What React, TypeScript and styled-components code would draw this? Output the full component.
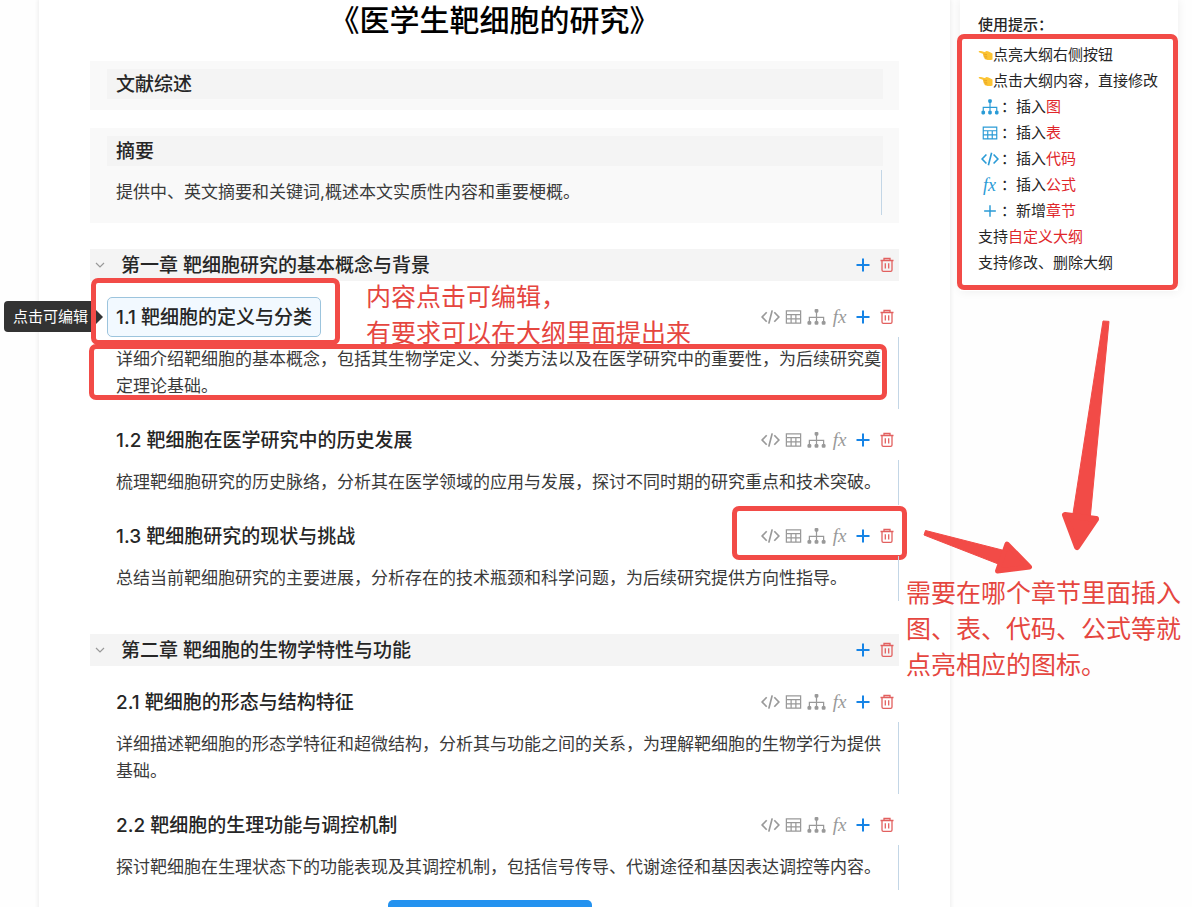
import React from "react";
import styled, { createGlobalStyle, css } from "styled-components";

const RED = "#f24b47";

const GlobalStyle = createGlobalStyle`
  *, *::before, *::after { box-sizing: border-box; }
  body {
    margin: 0;
    background: #fefefe;
    color: #262626;
    font-family: Inter, "Noto Sans CJK SC", sans-serif;
    font-size: 17px;
  }
  h1, h2, h3, p, ul { margin: 0; padding: 0; }
  button { font: inherit; color: inherit; border: 0; padding: 0; background: none; cursor: pointer; }
`;

const Page = styled.div`
  display: flex;
  align-items: flex-start;
  gap: 10px;
  height: 100vh;
  padding: 0 14px 0 39px;
  overflow-x: hidden;
  overflow-y: auto;
  scrollbar-width: none;
`;

const Panel = styled.main`
  flex: 1;
  min-width: 0;
  min-height: 100%;
  padding: 0 51px 40px;
  background: #fff;
  box-shadow: 0 0 4px 1px rgba(0, 0, 0, 0.07);
`;

const PaperTitle = styled.h1`
  margin-bottom: 21px;
  text-align: center;
  font-size: 30px;
  line-height: 40px;
  font-weight: 500;
  color: #000;
`;

const Card = styled.section`
  margin-bottom: 18px;
  padding: 8px 16px 11px 17px;
  background: #f9f9f9;
`;

const CardTitle = styled.h2`
  padding: 2px 9px 0;
  background: #f4f4f4;
  font-size: 19px;
  line-height: 28px;
  font-weight: 500;
`;

const Description = styled.p`
  position: relative;
  padding: 9px;
  border-right: 1px solid #c3d6e6;
  line-height: 27px;
  color: #3a3a3a;
`;

const CardBody = styled(Description)`
  margin: 4px 1px -3px 0;
`;

const Chapters = styled.div`
  padding-top: 8px;
`;

const Chapter = styled.section`
  & + & { margin-top: 33px; }
`;

const ChapterBar = styled.header`
  display: flex;
  align-items: center;
  height: 32px;
  margin-bottom: 16px;
  padding: 0 2px 0 5px;
  background: #f4f4f4;
`;

const ChapterTitle = styled.h2`
  flex: 1;
  margin-left: 16px;
  padding-top: 2px;
  font-size: 19px;
  line-height: 30px;
  font-weight: 500;
`;

const Collapse = styled.button`
  display: flex;
  width: 10px;
  color: #999;
`;

const Item = styled.article`
  padding-left: 17px;
  & + & { margin-top: 11px; }
`;

const ItemHead = styled.div`
  position: relative;
  display: flex;
  align-items: center;
  justify-content: space-between;
  height: 40px;
  padding-right: 2px;
`;

const ItemTitle = styled.h3`
  position: relative;
  display: flex;
  font-size: 19px;
  font-weight: 500;
`;

const EditButton = styled.button<{ $active?: boolean }>`
  height: 40px;
  padding: 0 8px 3px;
  border: 1px solid transparent;
  border-radius: 5px;
  ${(p) => p.$active && css`
    border-color: #9cc4dd;
    background: #f2f9ff;
  `}
`;

const Actions = styled.div`
  position: relative;
  display: flex;
  gap: 4px;
`;

const IconButton = styled.button<{ $tone: string; $narrow?: boolean }>`
  display: flex;
  align-items: center;
  justify-content: center;
  width: ${(p) => (p.$narrow ? 19 : 20)}px;
  height: 20px;
  color: ${(p) => p.$tone};
`;

const Formula = styled.span<{ $size: number }>`
  font-family: "Liberation Serif", serif;
  font-style: italic;
  font-size: ${(p) => p.$size}px;
  line-height: 20px;
`;

const Footer = styled.footer`
  display: flex;
  justify-content: center;
  padding: 10px 9px 0 0;
`;

const Submit = styled.button`
  width: 204px;
  height: 40px;
  border-radius: 5px;
  background: #2492ef;
`;

const Tooltip = styled.span`
  position: absolute;
  top: 4px;
  right: calc(100% + 12px);
  width: 91px;
  padding-left: 9px;
  border-radius: 4px;
  background: #333;
  color: #fff;
  font-size: 15px;
  line-height: 31px;
  font-weight: 400;
  white-space: nowrap;
  &::after {
    content: "";
    position: absolute;
    left: 100%;
    top: 8px;
    border: 8px solid transparent;
    border-left-color: #333;
    border-right-width: 0;
  }
`;

const Frame = styled.span<{ $inset: string }>`
  position: absolute;
  inset: ${(p) => p.$inset};
  border: 5px solid ${RED};
  border-radius: 7px;
  pointer-events: none;
`;

const Note = styled.p<{ $left: number; $top: number }>`
  position: absolute;
  left: ${(p) => p.$left}px;
  top: ${(p) => p.$top}px;
  color: #e5463f;
  font-size: 25px;
  line-height: 36px;
  white-space: nowrap;
`;

const Sidebar = styled.aside`
  position: relative;
  width: 218px;
  padding: 12px 0 15px 18px;
  background: #fff;
  box-shadow: 0 0 10px rgba(0, 0, 0, 0.07);
  font-size: 15px;
  line-height: 26px;
`;

const TipTitle = styled.h2`
  margin-bottom: 4px;
  font-size: 15px;
  font-weight: 500;
`;

const TipList = styled.ul`
  list-style: none;
`;

const Tip = styled.li`
  display: flex;
  align-items: center;
  height: 26px;
  white-space: nowrap;
`;

const TipIcon = styled.span<{ $wide?: boolean }>`
  display: flex;
  align-items: center;
  justify-content: center;
  width: ${(p) => (p.$wide ? 23 : 15)}px;
  color: #2a9bd6;
`;

const Strong = styled.em`
  font-style: normal;
  color: #e0262b;
`;

const Arrows = styled.svg`
  position: absolute;
  left: -40px;
  top: 316px;
  pointer-events: none;
`;

const CodeIcon = ({ size = 20 }: { size?: number }) => (
  <svg width={size} height={size} viewBox="0 0 20 20" fill="none" stroke="currentColor" strokeWidth="1.8">
    <path d="M6 5 1.200 10 6 15M14 5l4.800 5L14 15M11.800 3 8.200 17" />
  </svg>
);

const TableIcon = ({ size = 20 }: { size?: number }) => (
  <svg width={size} height={size} viewBox="0 0 20 20" fill="none" stroke="currentColor" strokeWidth="1.300">
    <path d="M2.500 3.500h15v13h-15zM2.500 7.500h15M2.500 12h15M7.500 7.500v9M12.500 7.500v9" />
  </svg>
);

const TreeIcon = ({ size = 20 }: { size?: number }) => (
  <svg width={size} height={size} viewBox="0 0 20 20" fill="none" stroke="currentColor" strokeWidth="1.300">
    <path d="M10 4v12M2.500 16v-5.500h15V16" />
    <g fill="currentColor" stroke="none">
      <rect x="8" y="1.500" width="4" height="4" rx="1.200" />
      <rect x="0.500" y="14.200" width="4" height="4" rx="1.200" />
      <rect x="8" y="14.200" width="4" height="4" rx="1.200" />
      <rect x="15.500" y="14.200" width="4" height="4" rx="1.200" />
    </g>
  </svg>
);

const PlusIcon = ({ size = 20, weight = 2 }: { size?: number; weight?: number }) => (
  <svg width={size} height={size} viewBox="0 0 20 20" fill="none" stroke="currentColor" strokeWidth={weight}>
    <path d="M10 3.500v13M3.500 10h13" />
  </svg>
);

const TrashIcon = () => (
  <svg width="20" height="20" viewBox="0 0 20 20" fill="none" stroke="currentColor" strokeWidth="1.300">
    <path d="M3.500 5.500h13M7 5.500V3.500h6v2M5 5.500v9.500q0 1.300 1.300 1.300h7.400q1.300 0 1.300-1.300V5.500M8.300 8.300v5.200M11.700 8.300v5.200" />
  </svg>
);

const ChevronIcon = () => (
  <svg width="10" height="10" viewBox="0 0 10 10" fill="none" stroke="currentColor" strokeWidth="1.200">
    <path d="M1 3l4 4 4-4" />
  </svg>
);

const HandIcon = () => (
  <svg width="15" height="12" viewBox="0 0 15 12">
    <path
      d="M.8 2.200C1.200 1.500 4.500 2.500 7 2.900 8 1.800 9.200 1.700 10.500 2.500L14.500 4.500V10.500C12.500 11.300 9.500 11.200 8 10.500 6.500 10.200 6.400 9.400 6.700 8.900 5.500 8.500 5.300 7.600 5.800 7.100 4.800 6.600 4.800 5.600 5.400 5.100L1.500 3.600C.8 3.300.6 2.700.8 2.200Z"
      fill="#fcc433"
    />
    <path d="M5.400 5.100 9 5.500M5.800 7.100l3.400.2M6.700 8.900l2.600.1" stroke="#e09a1c" strokeWidth=".7" fill="none" />
  </svg>
);

const GREY = "#999";

const EditActions = ({ full, framed }: { full?: boolean; framed?: boolean }) => (
  <Actions>
    {full && (
      <>
        <IconButton $narrow $tone={GREY} aria-label="插入代码"><CodeIcon /></IconButton>
        <IconButton $narrow $tone={GREY} aria-label="插入表"><TableIcon /></IconButton>
        <IconButton $narrow $tone={GREY} aria-label="插入图"><TreeIcon /></IconButton>
        <IconButton $narrow $tone={GREY} aria-label="插入公式"><Formula $size={19}>fx</Formula></IconButton>
      </>
    )}
    <IconButton $tone="#1684e6" aria-label="新增章节"><PlusIcon /></IconButton>
    <IconButton $tone="#e2605f" aria-label="删除"><TrashIcon /></IconButton>
    {framed && <Frame $inset="-20px -10px -14px -29px" />}
  </Actions>
);

type Entry = { title: string; text: string; active?: boolean; framed?: boolean };

const chapters: { title: string; items: Entry[] }[] = [
  {
    title: "第一章 靶细胞研究的基本概念与背景",
    items: [
      {
        title: "1.1 靶细胞的定义与分类",
        text: "详细介绍靶细胞的基本概念，包括其生物学定义、分类方法以及在医学研究中的重要性，为后续研究奠定理论基础。",
        active: true,
      },
      {
        title: "1.2 靶细胞在医学研究中的历史发展",
        text: "梳理靶细胞研究的历史脉络，分析其在医学领域的应用与发展，探讨不同时期的研究重点和技术突破。",
      },
      {
        title: "1.3 靶细胞研究的现状与挑战",
        text: "总结当前靶细胞研究的主要进展，分析存在的技术瓶颈和科学问题，为后续研究提供方向性指导。",
        framed: true,
      },
    ],
  },
  {
    title: "第二章 靶细胞的生物学特性与功能",
    items: [
      {
        title: "2.1 靶细胞的形态与结构特征",
        text: "详细描述靶细胞的形态学特征和超微结构，分析其与功能之间的关系，为理解靶细胞的生物学行为提供基础。",
      },
      {
        title: "2.2 靶细胞的生理功能与调控机制",
        text: "探讨靶细胞在生理状态下的功能表现及其调控机制，包括信号传导、代谢途径和基因表达调控等内容。",
      },
    ],
  },
];

const OutlineItem = ({ title, text, active, framed }: Entry) => (
  <Item>
    <ItemHead>
      <ItemTitle>
        <EditButton $active={active}>{title}</EditButton>
        {active && (
          <>
            <Tooltip role="tooltip">点击可编辑</Tooltip>
            <Frame $inset="-19px -19px -8px -16px" />
          </>
        )}
      </ItemTitle>
      <EditActions full framed={framed} />
      {active && (
        <Note $left={259} $top={-18}>
          内容点击可编辑，<br />有要求可以在大纲里面提出来
        </Note>
      )}
    </ItemHead>
    <Description>
      {text}
      {active && <Frame $inset="7px 11px 9px -18px" />}
    </Description>
  </Item>
);

const inserts = [
  { icon: <TreeIcon size={18} />, verb: "插入", target: "图" },
  { icon: <TableIcon size={18} />, verb: "插入", target: "表" },
  { icon: <CodeIcon size={18} />, verb: "插入", target: "代码" },
  { icon: <Formula $size={18}>fx</Formula>, verb: "插入", target: "公式" },
  { icon: <PlusIcon size={18} weight={1.6} />, verb: "新增", target: "章节" },
];

export default function App() {
  return (
    <>
      <GlobalStyle />
      <Page>
        <Panel>
          <PaperTitle>《医学生靶细胞的研究》</PaperTitle>
          <Card>
            <CardTitle>文献综述</CardTitle>
          </Card>
          <Card>
            <CardTitle>摘要</CardTitle>
            <CardBody>提供中、英文摘要和关键词,概述本文实质性内容和重要梗概。</CardBody>
          </Card>
          <Chapters>
            {chapters.map((chapter) => (
              <Chapter key={chapter.title}>
                <ChapterBar>
                  <Collapse aria-label="收起章节"><ChevronIcon /></Collapse>
                  <ChapterTitle>{chapter.title}</ChapterTitle>
                  <EditActions />
                </ChapterBar>
                {chapter.items.map((item) => (
                  <OutlineItem key={item.title} {...item} />
                ))}
              </Chapter>
            ))}
          </Chapters>
          <Footer>
            <Submit aria-label="提交大纲" />
          </Footer>
        </Panel>
        <Sidebar>
          <TipTitle>使用提示：</TipTitle>
          <TipList>
            <Tip><TipIcon><HandIcon /></TipIcon>点亮大纲右侧按钮</Tip>
            <Tip><TipIcon><HandIcon /></TipIcon>点击大纲内容，直接修改</Tip>
            {inserts.map(({ icon, verb, target }) => (
              <Tip key={target}>
                <TipIcon $wide>{icon}</TipIcon>：{verb}<Strong>{target}</Strong>
              </Tip>
            ))}
            <Tip>支持<Strong>自定义大纲</Strong></Tip>
            <Tip>支持修改、删除大纲</Tip>
          </TipList>
          <Frame $inset="34px 0 1px -3px" />
          <Arrows width="192" height="264" viewBox="0 0 192 264" fill={RED} stroke={RED} strokeLinejoin="round">
            <path d="M183 5l6 .4L170 204h-18z" strokeWidth="1" />
            <path d="M145 199l31 4-19 28z" strokeWidth="6" />
            <path d="M5.500 214.500 90 236l-4 15L4 219z" strokeWidth="1" />
            <path d="M87 228l22.500 23-32 4z" strokeWidth="5" />
          </Arrows>
          <Note $left={-54} $top={575}>
            需要在哪个章节里面插入<br />图、表、代码、公式等就<br />点亮相应的图标。
          </Note>
        </Sidebar>
      </Page>
    </>
  );
}
